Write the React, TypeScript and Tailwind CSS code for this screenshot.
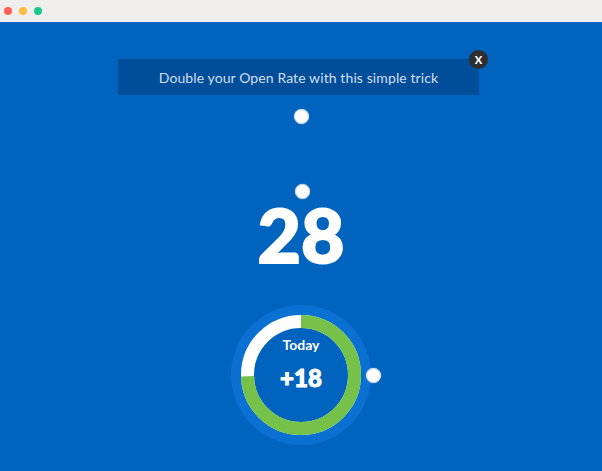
import React from 'react';

const Dot: React.FC<{ className?: string }> = ({ className = '' }) => (
  <div className={`w-[15px] h-[15px] rounded-full bg-white border border-[#c9d3de] shadow-[0_0_1px_rgba(255,255,255,0.8)] ${className}`} />
);

const Ring: React.FC<{ pct: number }> = ({ pct }) => {
  const r = 53.5;
  const c = 2 * Math.PI * r;
  return (
    <svg width="140" height="140" viewBox="0 0 140 140" className="block">
      <circle cx="70" cy="70" r="70" fill="#0a71d3" />
      <circle cx="70" cy="70" r="60" fill="#0063bd" />
      <circle cx="70" cy="70" r={r} fill="none" stroke="#ffffff" strokeWidth="13" />
      <circle
        cx="70"
        cy="70"
        r={r}
        fill="none"
        stroke="#76c149"
        strokeWidth="13"
        strokeDasharray={`${c * pct} ${c}`}
        transform="rotate(-90 70 70)"
      />
    </svg>
  );
};

export default function App() {
  return (
    <div className="w-[602px] h-[471px] overflow-hidden bg-[#0063bd] flex flex-col" style={{ fontFamily: 'Lato, "Open Sans", sans-serif' }}>
      {/* window chrome */}
      <div className="h-[22px] bg-[#f0eeec] flex items-center gap-[7px] pl-[4px] shrink-0">
        <span className="w-[8px] h-[8px] rounded-full bg-[#fd5f57]" />
        <span className="w-[8px] h-[8px] rounded-full bg-[#fdbd3e]" />
        <span className="w-[8px] h-[8px] rounded-full bg-[#18c98b]" />
      </div>

      {/* banner */}
      <div className="relative ml-[118px] mt-[37px] w-[361px] h-[36px] bg-[#004e99] flex items-center justify-center">
        <span className="text-[14px] text-[#d3deee] tracking-[0.1px]">Double your Open Rate with this simple trick</span>
        <div className="absolute -right-[9px] -top-[9px] w-[19px] h-[19px] rounded-full bg-[#2e2e2e] flex items-center justify-center">
          <span className="text-white text-[11px] font-black leading-none">X</span>
        </div>
      </div>

      <div className="flex flex-col items-center">
        <Dot className="mt-[14px]" />
        <Dot className="mt-[60px] translate-x-[1px]" />
        <div className="text-white font-black text-[75px] leading-none -mt-[2px] [-webkit-text-stroke:2px_white]">28</div>

        <div className="relative mt-[33px]">
          <Ring pct={0.745} />
          <div className="absolute inset-0 flex flex-col items-center justify-center pb-[22px]">
            <span className="text-white text-[14px] font-bold leading-none">Today</span>
            <span className="text-white text-[24px] font-black leading-none mt-[14px] [-webkit-text-stroke:1px_white]">+18</span>
          </div>
          <Dot className="absolute left-[135px] top-[63px]" />
        </div>
      </div>
    </div>
  );
}
